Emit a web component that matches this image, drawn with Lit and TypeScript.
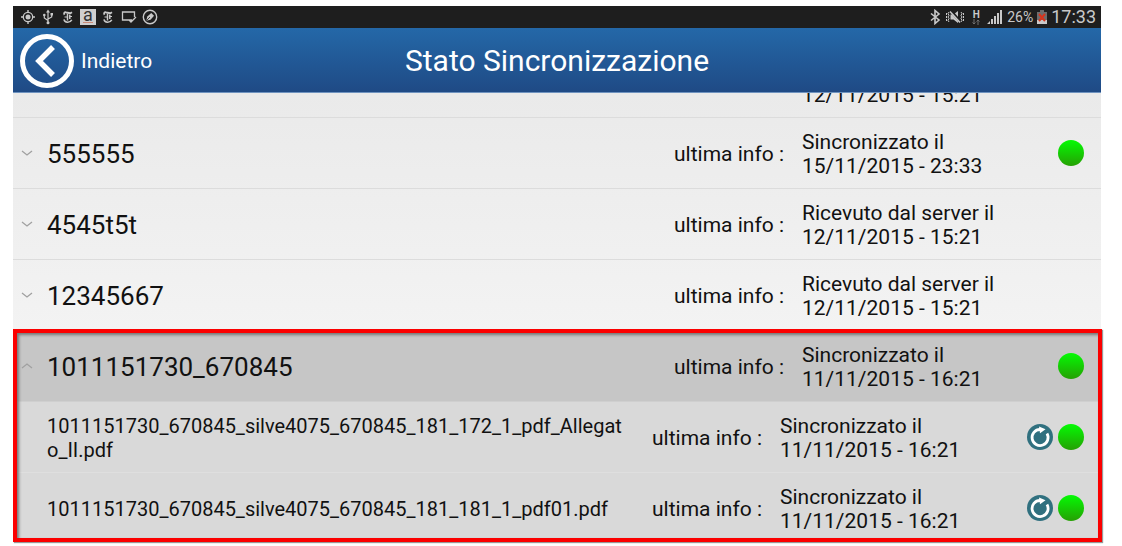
import { LitElement, html, css, svg, nothing } from "lit";
import { customElement, property, state } from "lit/decorators.js";

interface Entry {
  name: string;
  status: string;
  date: string;
  synced: boolean;
}

const files: Entry[] = [
  {
    name: "1011151730_670845_silve4075_670845_181_172_1_pdf_Allegato_II.pdf",
    status: "Sincronizzato il",
    date: "11/11/2015 - 16:21",
    synced: true,
  },
  {
    name: "1011151730_670845_silve4075_670845_181_181_1_pdf01.pdf",
    status: "Sincronizzato il",
    date: "11/11/2015 - 16:21",
    synced: true,
  },
];

const entries: Entry[] = [
  { name: "", status: "Ricevuto dal server il", date: "12/11/2015 - 15:21", synced: false },
  { name: "555555", status: "Sincronizzato il", date: "15/11/2015 - 23:33", synced: true },
  { name: "4545t5t", status: "Ricevuto dal server il", date: "12/11/2015 - 15:21", synced: false },
  { name: "12345667", status: "Ricevuto dal server il", date: "12/11/2015 - 15:21", synced: false },
];

const newsLogo = svg`
  <g fill="none" stroke="currentColor">
    <path d="M3.500 4.800C2.500 3 3.500 2 5 2.300S8 3.400 9.500 3.200L11 2.200" stroke-width="1.800" />
    <path d="M6.500 3.500v7" stroke-width="1.500" />
    <path d="M3.500 7h3M8.500 6.500H11" stroke-width="1.200" />
    <path d="M3 9.300C3.500 13 9 13 10.800 9.800M8.800 4.500v4.500" stroke-width="1.500" />
  </g>`;

@customElement("status-bar")
export class StatusBar extends LitElement {
  static styles = css`
    :host {
      display: flex;
      justify-content: space-between;
      align-items: center;
      height: 22px;
      padding: 0 5px 0 7px;
      background: #1e1e1e;
      color: #c9c9c9;
      font-family: Roboto, sans-serif;
    }
    .group {
      display: flex;
      align-items: center;
      gap: 4px;
    }
    svg {
      display: block;
      flex: none;
    }
    .app {
      box-sizing: border-box;
      width: 16px;
      height: 16px;
      background: linear-gradient(#c98a78, #c98a78) center 13px / 10px 1px no-repeat #cfcfcf;
      color: #333;
      font-size: 18px;
      line-height: 12px;
      text-align: center;
    }
    .net {
      display: flex;
      flex-direction: column;
      align-items: center;
      width: 14px;
      font-size: 10px;
      font-weight: 700;
      line-height: 9px;
    }
    .percent {
      font-size: 14px;
    }
    .time {
      font-size: 18px;
      line-height: 22px;
    }
  `;

  render() {
    return html`
      <div class="group">
        <svg width="16" height="16" viewBox="0 0 16 16" fill="none" stroke="currentColor">
          <circle cx="8" cy="8" r="4.700" stroke-width="1.300" />
          <circle cx="8" cy="8" r="2.500" fill="currentColor" stroke="none" />
          <path d="M8 1v3M8 12v3M1 8h3M12 8h3" stroke-width="1.400" />
        </svg>
        <svg width="16" height="16" viewBox="0 0 16 16" fill="none" stroke="currentColor" stroke-width="1.200">
          <path d="M8 2v11M8 11.500L4.300 9V6.500M8 10l3.700-2V5.500" />
          <path d="M8 .5l2 3H6zM10.500 4h2.500v2.500h-2.500z" fill="currentColor" stroke="none" />
          <circle cx="4.300" cy="6" r="1.300" fill="currentColor" stroke="none" />
          <circle cx="8" cy="13.700" r="1.500" fill="currentColor" stroke="none" />
        </svg>
        <svg width="16" height="16" viewBox="-1 -1 16 16">${newsLogo}</svg>
        <span class="app">a</span>
        <svg width="16" height="16" viewBox="-1 -1 16 16">${newsLogo}</svg>
        <svg width="18" height="16" viewBox="0 0 18 16" fill="none" stroke="currentColor" stroke-width="1.300">
          <path d="M9 11H2.500V3h12v5M9 11l2 2 5-5M9 11h3" />
        </svg>
        <svg width="16" height="16" viewBox="0 0 16 16" fill="none" stroke="currentColor">
          <circle cx="8" cy="8" r="6.700" stroke-width="1.400" />
          <path d="M4.300 11.700l1-4.200 4-3.500 2.700 2.700-3.500 4z" fill="currentColor" stroke="none" />
          <path d="M4.500 11.500L8 8" stroke="#1e1e1e" stroke-width=".8" />
        </svg>
      </div>
      <div class="group">
        <svg width="12" height="16" viewBox="0 0 12 16" fill="none" stroke="currentColor" stroke-width="1.600">
          <path d="M2 4.500l8 6.500-4 3.500v-13L10 5l-8 6.500" />
        </svg>
        <svg width="20" height="16" viewBox="0 0 20 16" fill="none" stroke="currentColor">
          <path d="M5.500 5.500h3L13 2v12l-4.500-3.500h-3z" fill="currentColor" stroke="none" />
          <path d="M6 2l9.500 11" stroke="#1e1e1e" stroke-width="2.800" />
          <path d="M5 2.500l10 11" stroke-width="1.500" />
          <path d="M4 3L3 4.700l1 1.600-1 1.700 1 1.600-1 1.700 1 1.700M16 3l1 1.700-1 1.600 1 1.700-1 1.600 1 1.700-1 1.700" stroke-width="1" />
          <path d="M1.500 4v8M18.500 4v8" stroke-width="1" stroke-dasharray="2 1" />
        </svg>
        <span class="net">
          H
          <svg width="8" height="6" viewBox="0 0 8 6" fill="none" stroke="#707070">
            <path d="M2 0v5M.5 3.500L2 5l1.500-1.500M6 6V1M4.500 2.500L6 1l1.500 1.500" />
          </svg>
        </span>
        <svg width="16" height="16" viewBox="0 0 16 16" fill="currentColor">
          <path d="M0 15l3-3v3zM4 15v-5h2v5zM7 15V7h2v8zM10 15V4h2v11zM13 15V1h2v14z" />
        </svg>
        <span class="percent">26%</span>
        <svg width="10" height="14" viewBox="0 0 10 14">
          <path d="M3 0h4v2h3v12H0V2h3z" fill="#6d6d6d" />
          <path d="M0 10h10v4H0z" fill="#c9c9c9" />
          <path d="M2 4l6 7M8 4l-6 7" stroke="#d8341c" stroke-width="2" />
        </svg>
        <span class="time">17:33</span>
      </div>
    `;
  }
}

@customElement("sync-row")
export class SyncRow extends LitElement {
  @property({ attribute: false }) entry!: Entry;
  @property({ type: Boolean }) child = false;
  @property({ type: Boolean }) open = false;

  static styles = css`
    :host {
      display: block;
      color: #111;
      font-family: Roboto, sans-serif;
      font-size: 21px;
      line-height: 24px;
    }
    .row {
      display: flex;
      align-items: center;
      box-sizing: border-box;
      height: 71px;
      padding-right: 17px;
      border-bottom: 1px solid #dcdcdc;
    }
    .row.open {
      background: #c6c6c6;
      border-color: #cfcfcf;
    }
    .row.child {
      background: #d9d9d9;
      border-color: #dfdfdf;
    }
    .toggle {
      display: flex;
      justify-content: center;
      flex: none;
      width: 27px;
      margin-right: 7px;
      padding: 12px 0;
      border: 0;
      background: none;
    }
    .name,
    .label,
    .status {
      padding-top: 2px;
    }
    .name {
      flex: 1;
      min-width: 0;
      padding-right: 12px;
      font-size: 26px;
      line-height: 32px;
      overflow-wrap: anywhere;
    }
    .child .name {
      padding-left: 34px;
      padding-right: 24px;
      font-size: 20px;
      line-height: 24px;
    }
    .label {
      flex: none;
      width: 128px;
    }
    .status {
      flex: none;
      width: 256px;
    }
    .child .status {
      width: 247px;
    }
    .actions {
      display: flex;
      flex: none;
      gap: 5px;
      min-width: 26px;
    }
    .dot {
      width: 26px;
      height: 26px;
      border-radius: 50%;
      background: linear-gradient(#04fb04, #26a004);
    }
    .retry {
      width: 26px;
      height: 26px;
      padding: 0;
      border: 0;
      border-radius: 50%;
      background: #30707f;
    }
    svg {
      display: block;
    }
  `;

  render() {
    const { name, status, date, synced } = this.entry;
    return html`
      <div class="row ${this.child ? "child" : ""} ${this.open ? "open" : ""}">
        ${this.child
          ? nothing
          : html`<button
              class="toggle"
              aria-label="Espandi"
              aria-expanded=${this.open ? "true" : "false"}
              @click=${() => this.dispatchEvent(new CustomEvent("toggle-row"))}
            >
              <svg width="12" height="8" viewBox="0 0 12 8" fill="none" stroke="#a0a0a0" stroke-width="1.300">
                <path d=${this.open ? "M1 6l5-4 5 4" : "M1 2l5 4 5-4"} />
              </svg>
            </button>`}
        <div class="name">${name}</div>
        <div class="label">ultima info :</div>
        <div class="status">${status}<br />${date}</div>
        <div class="actions">
          ${this.child
            ? html`<button class="retry" aria-label="Sincronizza di nuovo">
                <svg width="26" height="26" viewBox="0 0 26 26">
                  <path d="M20 9.500A8 8 0 1 1 13 5.500" fill="none" stroke="#fff" stroke-width="2.800" />
                  <path d="M12 2.500l6.500 2.800-5.500 4z" fill="#fff" />
                </svg>
              </button>`
            : nothing}
          ${synced ? html`<span class="dot"></span>` : nothing}
        </div>
      </div>
    `;
  }
}

@customElement("app-root")
export class AppRoot extends LitElement {
  @state() private open = true;

  static styles = css`
    :host {
      display: block;
      box-sizing: border-box;
      min-height: 100vh;
      padding: 6px 21px 4px 13px;
      background: #fff;
      font-family: Roboto, sans-serif;
    }
    .header {
      display: grid;
      grid-template-columns: 1fr auto 1fr;
      align-items: center;
      height: 65px;
      box-sizing: border-box;
      padding-top: 2px;
      border-bottom: 1px solid #6f93bf;
      background: linear-gradient(#2468a8, #1f4a85);
      color: #fff;
    }
    .back {
      display: flex;
      align-items: center;
      justify-self: start;
      gap: 7px;
      padding: 0 0 0 7px;
      border: 0;
      background: none;
      color: inherit;
      font: 21px/24px Roboto, sans-serif;
    }
    .back svg {
      display: block;
    }
    .title {
      margin: 0;
      font-size: 30px;
      font-weight: 400;
      line-height: 36px;
    }
    .view {
      overflow: hidden;
      background: linear-gradient(#eaeaea, #f3f3f3);
    }
    .list {
      margin-top: -46px;
    }
    .group {
      position: relative;
    }
    .marked {
      position: absolute;
      inset: -2px -1px 0 0;
      border: 4px solid #fb0000;
      box-shadow: inset 2px 2px 3px #777, 1px 1px 1px #999;
      pointer-events: none;
    }
    .files {
      height: 140px;
      overflow: hidden;
    }
  `;

  render() {
    return html`
      <status-bar></status-bar>
      <header class="header">
        <button class="back">
          <svg width="54" height="54" viewBox="0 0 54 54" fill="none" stroke="#fff">
            <circle cx="27" cy="27" r="24.500" stroke-width="5" />
            <path d="M33 13L19 27l14 14" stroke-width="5.500" />
          </svg>
          Indietro
        </button>
        <h1 class="title">Stato Sincronizzazione</h1>
      </header>
      <main>
        <div class="view">
          <div class="list">
            ${entries.map((e) => html`<sync-row .entry=${e}></sync-row>`)}
          </div>
        </div>
        <section class="group">
          <sync-row
            open
            .entry=${{ name: "1011151730_670845", status: "Sincronizzato il", date: "11/11/2015 - 16:21", synced: true }}
            @toggle-row=${() => (this.open = !this.open)}
          ></sync-row>
          ${this.open
            ? html`<div class="files">${files.map((f) => html`<sync-row child .entry=${f}></sync-row>`)}</div>`
            : nothing}
          <div class="marked"></div>
        </section>
      </main>
    `;
  }
}
